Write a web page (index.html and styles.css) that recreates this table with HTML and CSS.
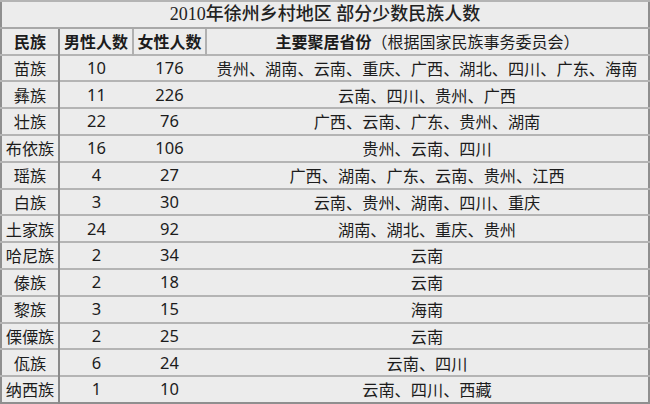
FILE: index.html
```html
<!DOCTYPE html>
<html lang="zh-CN">
<head>
<meta charset="utf-8">
<link rel="stylesheet" href="styles.css">
</head>
<body>
<table class="tbl">
  <colgroup>
    <col class="w1">
    <col class="w2">
    <col class="w3">
    <col class="w4">
  </colgroup>
  <tr class="title-row"><th colspan="4" class="title">2010年徐州乡村地区 部分少数民族人数</th></tr>
  <tr class="head-row">
    <th class="c1">民族</th>
    <th class="c2">男性人数</th>
    <th class="c3">女性人数</th>
    <th class="c4">主要聚居省份<span class="note">（根据国家民族事务委员会）</span></th>
  </tr>
  <tr><td class="c1">苗族</td><td class="c2">10</td><td class="c3">176</td><td class="c4">贵州、湖南、云南、重庆、广西、湖北、四川、广东、海南</td></tr>
  <tr><td class="c1">彝族</td><td class="c2">11</td><td class="c3">226</td><td class="c4">云南、四川、贵州、广西</td></tr>
  <tr><td class="c1">壮族</td><td class="c2">22</td><td class="c3">76</td><td class="c4">广西、云南、广东、贵州、湖南</td></tr>
  <tr><td class="c1">布依族</td><td class="c2">16</td><td class="c3">106</td><td class="c4">贵州、云南、四川</td></tr>
  <tr><td class="c1">瑶族</td><td class="c2">4</td><td class="c3">27</td><td class="c4">广西、湖南、广东、云南、贵州、江西</td></tr>
  <tr><td class="c1">白族</td><td class="c2">3</td><td class="c3">30</td><td class="c4">云南、贵州、湖南、四川、重庆</td></tr>
  <tr><td class="c1">土家族</td><td class="c2">24</td><td class="c3">92</td><td class="c4">湖南、湖北、重庆、贵州</td></tr>
  <tr><td class="c1">哈尼族</td><td class="c2">2</td><td class="c3">34</td><td class="c4">云南</td></tr>
  <tr><td class="c1">傣族</td><td class="c2">2</td><td class="c3">18</td><td class="c4">云南</td></tr>
  <tr><td class="c1">黎族</td><td class="c2">3</td><td class="c3">15</td><td class="c4">海南</td></tr>
  <tr><td class="c1">傈僳族</td><td class="c2">2</td><td class="c3">25</td><td class="c4">云南</td></tr>
  <tr><td class="c1">佤族</td><td class="c2">6</td><td class="c3">24</td><td class="c4">云南、四川</td></tr>
  <tr><td class="c1">纳西族</td><td class="c2">1</td><td class="c3">10</td><td class="c4">云南、四川、西藏</td></tr>
</table>
</body>
</html>
```

FILE: styles.css
```css
html, body {
  margin: 0;
  padding: 0;
  background: #ececec;
}
.tbl {
  width: 650px;
  height: 404px;
  border-collapse: collapse;
  background: #ececec;
  color: #1c1c1c;
  font-family: "Noto Sans CJK SC", "Noto Sans", sans-serif;
  font-size: 16.2px;
  table-layout: fixed;
  border: 2px solid #8f8f8f;
}
.w1 { width: 58px; }
.w2 { width: 74px; }
.w3 { width: 73px; }
.w4 { width: auto; }
.tbl th, .tbl td {
  padding: 0;
  text-align: center;
  vertical-align: middle;
  white-space: nowrap;
  line-height: 1;
  border-top: 2px solid #b4b4b4;
}
.title-row { height: 29px; }
.head-row { height: 27px; }
.tbl tr { height: 26.6px; }
.title {
  font-family: "Liberation Serif", "Noto Sans CJK SC", serif;
  font-size: 18px;
  font-weight: 500;
  color: #222;
  border-bottom: 2px solid #a8a8a8;
}
.head-row th {
  font-weight: 700;
  font-size: 16px;
  border-right: 2px solid #b0b0b0;
}
.head-row th.c4 { border-right: none; }
.note { font-weight: 400; }
.tbl .c1 { border-right: 2px solid #8a8a8a; }
.tbl td.c2, .tbl td.c3 {
  font-family: "Noto Sans", "DejaVu Sans", sans-serif;
  font-size: 16.5px;
}
```
